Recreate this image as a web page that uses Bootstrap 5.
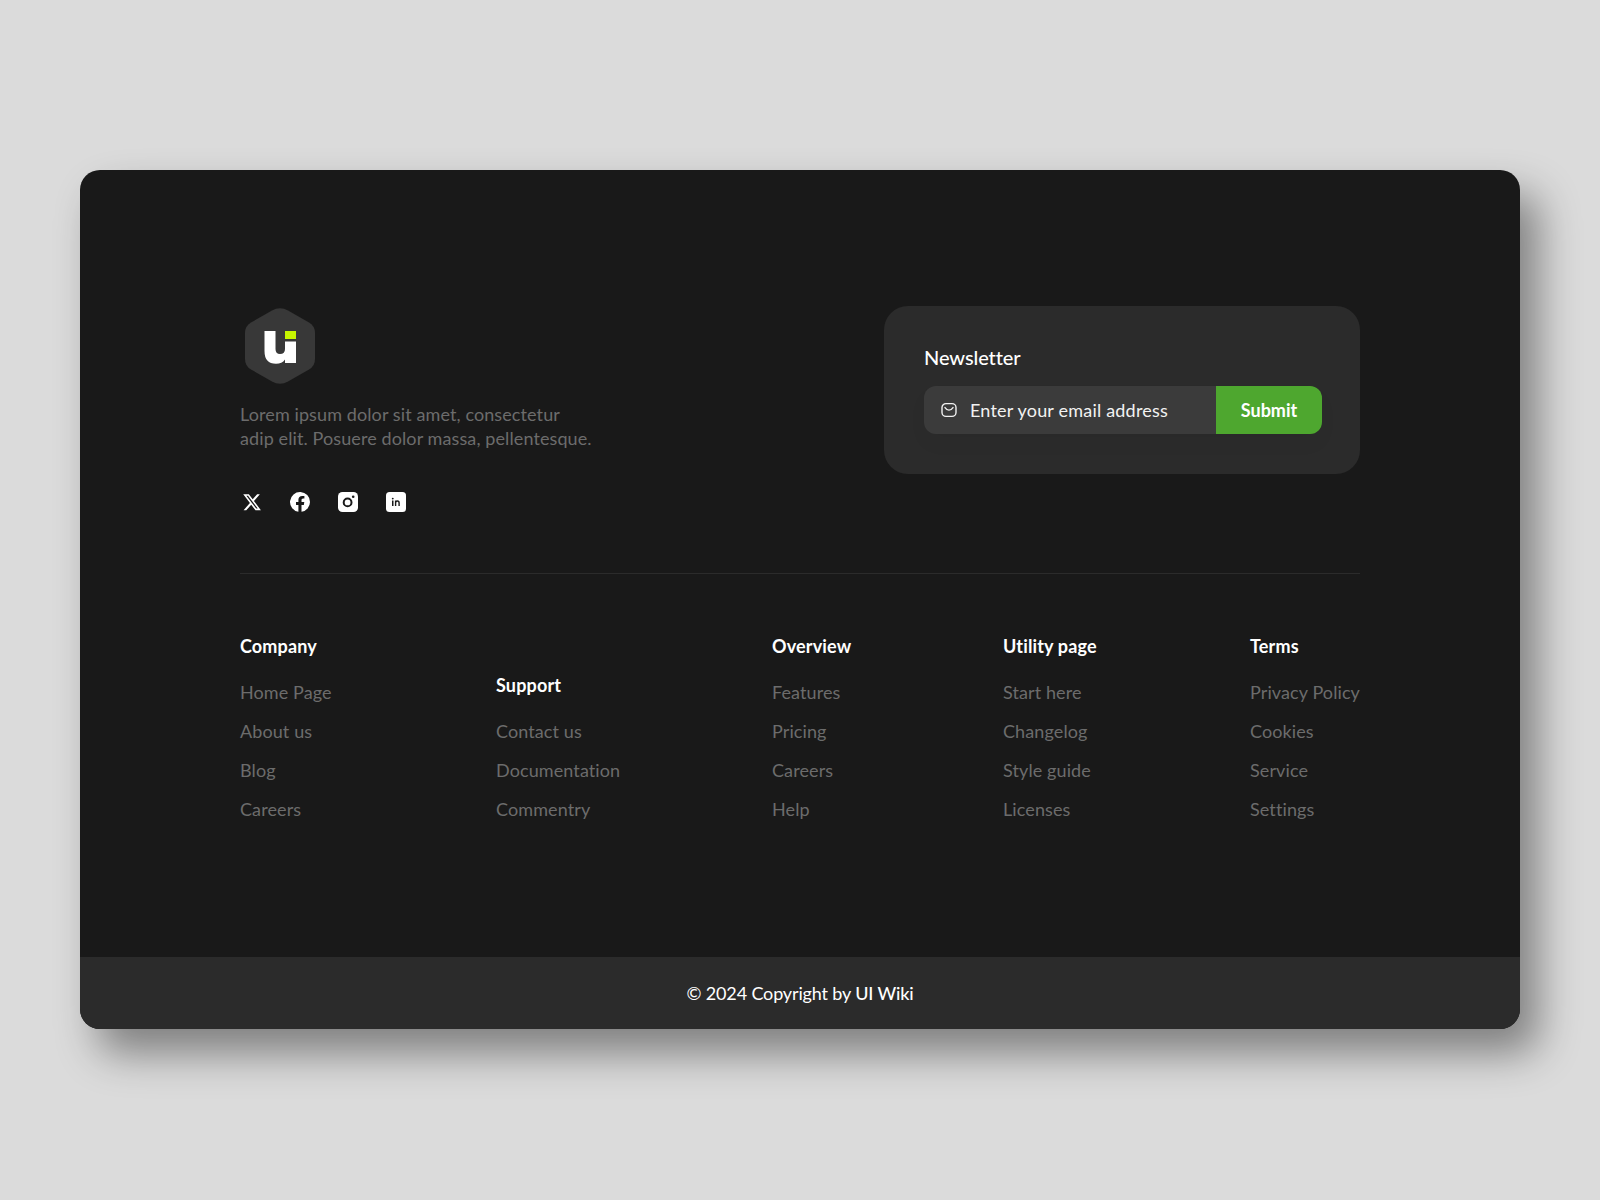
<!DOCTYPE html>
<html lang="en">
<head>
    <meta charset="UTF-8">
    <meta name="viewport" content="width=device-width, initial-scale=1.0">
    <title>Footer - UI Wiki</title>
    <link href="https://cdn.jsdelivr.net/npm/bootstrap@5.3.2/dist/css/bootstrap.min.css" rel="stylesheet">
    <style>
        body {
            font-family: 'Lato', 'Liberation Sans', sans-serif;
            font-size: 18px;
            line-height: 24px;
            background-color: #dbdbdb;
        }
        .page-wrap {
            height: 1200px;
            padding: 170px 80px 171px;
        }
        .footer-box {
            height: 859px;
            background: #191919;
            border-radius: 20px;
            box-shadow: 18px 24px 42px rgba(0,0,0,0.42);
            overflow: hidden;
        }
        .footer-main {
            padding: 136px 160px 0;
        }
        .top-row {
            height: 268px;
            border-bottom: 1px solid #2b2b2b;
        }
        .brand-logo {
            width: 80px;
            height: 80px;
        }
        .brand-text {
            color: #6c6c6c;
            margin: 16px 0 40px;
            letter-spacing: .1px;
            white-space: nowrap;
        }
        .social-list {
            gap: 24px;
        }
        .social-list svg {
            width: 24px;
            height: 24px;
            display: block;
        }
        .news-panel {
            width: 476px;
            height: 168px;
            padding: 39px 0 0 40px;
            background: #2b2b2b;
            border-radius: 24px;
        }
        .news-title {
            font-size: 20px;
            font-weight: 500;
            line-height: 24px;
            color: #fff;
            letter-spacing: -.1px;
            margin-bottom: 17px;
        }
        .news-group {
            width: 398px;
            height: 48px;
            border-radius: 12px;
            box-shadow: 0 10px 20px rgba(0,0,0,0.03);
        }
        .news-group .input-group-text {
            background: #3b3b3b;
            border: 0;
            border-radius: 12px 0 0 12px;
            padding: 0 14px 0 17px;
        }
        .news-group .form-control {
            background: #3b3b3b;
            border: 0;
            color: #fff;
            font-size: 18px;
            letter-spacing: .2px;
            padding: 0;
            box-shadow: none;
        }
        .news-group .form-control::placeholder {
            color: #f2f2f2;
            opacity: 1;
        }
        .news-group .btn {
            width: 106px;
            background: #4ea72f;
            border: 0;
            border-radius: 0 12px 12px 0;
            color: #fff;
            font-size: 18px;
            font-weight: 700;
            padding: 0;
        }
        .link-grid {
            display: grid;
            grid-template-columns: 256px 276px 231px 247px 110px;
            align-items: end;
            padding-top: 60px;
        }
        .col-title {
            font-size: 18px;
            font-weight: 700;
            color: #fff;
            letter-spacing: .15px;
            margin-bottom: 22px;
            line-height: 24px;
        }
        .col-links {
            gap: 15px;
        }
        .col-links a {
            color: #6c6c6c;
            letter-spacing: .1px;
            text-decoration: none;
            white-space: nowrap;
        }
        .copy-bar {
            height: 72px;
            background: #2b2b2b;
            color: #fff;
            letter-spacing: -.15px;
        }
        .copy-bar strong {
            font-weight: 500;
        }
    </style>
</head>
<body>
    <div class="page-wrap">
        <footer class="footer-box d-flex flex-column">
            <div class="footer-main flex-grow-1">
                <div class="top-row d-flex justify-content-between align-items-start">
                    <div>
                        <svg class="brand-logo d-block" viewBox="240 306 80 80">
                            <path d="M272 310.5 Q280 306 288 310.5 L309 322.5 Q315 326 315 333 V359 Q315 366 309 369.5 L288 381.5 Q280 386 272 381.5 L251 369.5 Q245 366 245 359 V333 Q245 326 251 322.5 Z" fill="#383838"/>
                            <path d="M264.5 331 H275.5 V349 Q275.5 354 280 354 Q285 354 285 349 V341.5 H296 V363 H285 V359.5 Q282 363.8 276 363.8 Q264.5 363.8 264.5 351 Z" fill="#fff"/>
                            <rect x="285" y="331" width="11" height="8" fill="#c6f500"/>
                        </svg>
                        <p class="brand-text">Lorem ipsum dolor sit amet, consectetur<br>adip elit. Posuere dolor massa, pellentesque.</p>
                        <div class="social-list d-flex">
                            <a href="#" aria-label="X">
                                <svg viewBox="0 0 24 24"><path transform="translate(2.2 2.4) scale(.82)" fill="#fff" d="M18.244 2.25h3.308l-7.227 8.26 8.502 11.24H16.17l-5.214-6.817L4.99 21.75H1.68l7.73-8.835L1.254 2.25H8.08l4.713 6.231zm-1.161 17.52h1.833L7.084 4.126H5.117z"/></svg>
                            </a>
                            <a href="#" aria-label="Facebook">
                                <svg viewBox="0 0 24 24"><path fill="#fff" d="M22 12a10 10 0 1 0-11.6 9.87v-6.99H8v-2.88h2.4V9.8c0-2.5 1.5-3.9 3.78-3.9 1.1 0 2.22.2 2.22.2v2.45h-1.25c-1.23 0-1.62.77-1.62 1.56V12h2.76l-.44 2.88H13.5v6.99A10 10 0 0 0 22 12z"/></svg>
                            </a>
                            <a href="#" aria-label="Instagram">
                                <svg viewBox="0 0 24 24">
                                    <rect x="2" y="2" width="20" height="20" rx="4.5" fill="#fff"/>
                                    <circle cx="11.6" cy="12.4" r="3.9" fill="none" stroke="#191919" stroke-width="2"/>
                                    <circle cx="17.2" cy="6.8" r="1.3" fill="#191919"/>
                                </svg>
                            </a>
                            <a href="#" aria-label="LinkedIn">
                                <svg viewBox="0 0 24 24">
                                    <rect x="2" y="2" width="20" height="20" rx="3.5" fill="#fff"/>
                                    <rect x="8" y="10.5" width="1.5" height="5.5" fill="#191919"/>
                                    <circle cx="8.75" cy="8.6" r=".95" fill="#191919"/>
                                    <path d="M11.6 10.5V16M11.6 13c0-1.3.8-2 1.8-2s1.7.7 1.7 2v3" fill="none" stroke="#191919" stroke-width="1.4"/>
                                </svg>
                            </a>
                        </div>
                    </div>
                    <div class="news-panel">
                        <h2 class="news-title">Newsletter</h2>
                        <div class="input-group news-group">
                            <span class="input-group-text">
                                <svg width="16" height="16" viewBox="0 0 16 16" fill="none" stroke="#f2f2f2" stroke-width="1.4"><rect x="1" y="1.6" width="14" height="12.8" rx="4"/><path d="M4 5.6c1.2 1.7 2.5 2.5 4 2.5s2.8-.8 4-2.5" stroke-linecap="round"/></svg>
                            </span>
                            <input type="email" class="form-control" placeholder="Enter your email address">
                            <button type="button" class="btn">Submit</button>
                        </div>
                    </div>
                </div>

                <div class="link-grid">
                    <div>
                        <h3 class="col-title">Company</h3>
                        <div class="col-links d-flex flex-column">
                            <a href="#">Home Page</a>
                            <a href="#">About us</a>
                            <a href="#">Blog</a>
                            <a href="#">Careers</a>
                        </div>
                    </div>
                    <div>
                        <h3 class="col-title">Support</h3>
                        <div class="col-links d-flex flex-column">
                            <a href="#">Contact us</a>
                            <a href="#">Documentation</a>
                            <a href="#">Commentry</a>
                        </div>
                    </div>
                    <div>
                        <h3 class="col-title">Overview</h3>
                        <div class="col-links d-flex flex-column">
                            <a href="#">Features</a>
                            <a href="#">Pricing</a>
                            <a href="#">Careers</a>
                            <a href="#">Help</a>
                        </div>
                    </div>
                    <div>
                        <h3 class="col-title">Utility page</h3>
                        <div class="col-links d-flex flex-column">
                            <a href="#">Start here</a>
                            <a href="#">Changelog</a>
                            <a href="#">Style guide</a>
                            <a href="#">Licenses</a>
                        </div>
                    </div>
                    <div>
                        <h3 class="col-title">Terms</h3>
                        <div class="col-links d-flex flex-column">
                            <a href="#">Privacy Policy</a>
                            <a href="#">Cookies</a>
                            <a href="#">Service</a>
                            <a href="#">Settings</a>
                        </div>
                    </div>
                </div>
            </div>
            <div class="copy-bar d-flex align-items-center justify-content-center">
                <span>© 2024 Copyright by <strong>UI Wiki</strong></span>
            </div>
        </footer>
    </div>
    <script src="https://cdn.jsdelivr.net/npm/bootstrap@5.3.2/dist/js/bootstrap.bundle.min.js"></script>
</body>
</html>
